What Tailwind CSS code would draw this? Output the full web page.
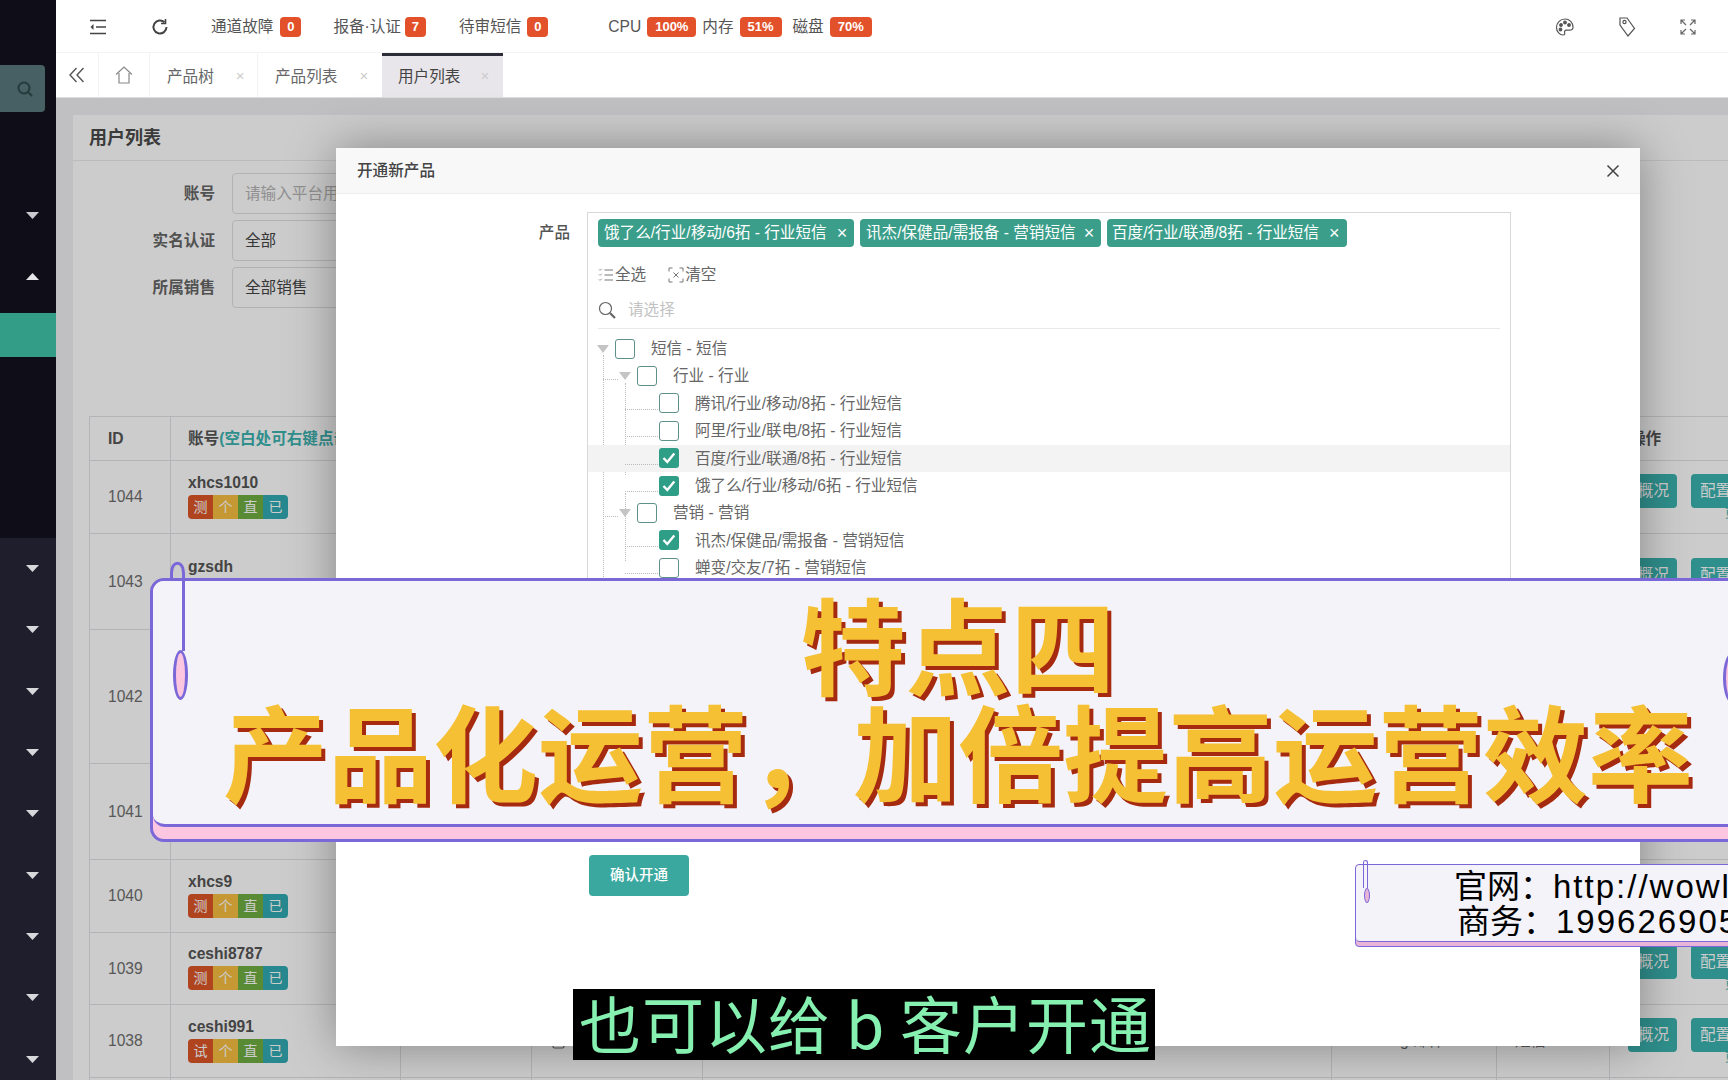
<!DOCTYPE html>
<html lang="zh-CN">
<head>
    <meta charset="UTF-8">
    <title>用户列表</title>
    <script src="https://cdn.jsdelivr.net/npm/@tailwindcss/browser@4"></script>
</head>
<body class="overflow-hidden">
<div class="relative w-[1728px] h-[1080px] overflow-hidden flex bg-white text-[15.6px] text-[#555] font-['Liberation_Sans','Noto_Sans_CJK_SC',sans-serif]">

    <!-- sidebar -->
    <aside class="w-[56px] shrink-0 flex flex-col bg-[#1e1e2c]">
        <div class="h-[538px] shrink-0 bg-[#0f0d18] flex flex-col">
            <div class="h-[65px]"></div>
            <div class="w-[45px] h-[47px] rounded-r bg-[#466063] flex items-center justify-end pr-[11px]">
                <svg class="w-[18px] h-[18px]" viewBox="0 0 18 18" fill="none" stroke="#26393c" stroke-width="2"><circle cx="8" cy="8" r="5.5"/><path d="M12 12l4 4"/></svg>
            </div>
            <div class="h-[73px]"></div>
            <div class="h-[61px] flex items-center justify-center pl-[9px]"><svg class="w-[13px] h-[7px]" viewBox="0 0 13 7"><path d="M0 0h13L6.5 7z" fill="#c9c9cf"/></svg></div>
            <div class="h-[61px] flex items-center justify-center pl-[9px]"><svg class="w-[13px] h-[7px]" viewBox="0 0 13 7"><path d="M0 7h13L6.5 0z" fill="#e6e6ea"/></svg></div>
            <div class="mt-[6px] h-[44px] bg-[#349d87]"></div>
        </div>
        <div class="h-[61.3px] shrink-0 flex items-center justify-center pl-[9px]"><svg class="w-[13px] h-[7px]" viewBox="0 0 13 7"><path d="M0 0h13L6.5 7z" fill="#d8d8dc"/></svg></div>
        <div class="h-[61.3px] shrink-0 flex items-center justify-center pl-[9px]"><svg class="w-[13px] h-[7px]" viewBox="0 0 13 7"><path d="M0 0h13L6.5 7z" fill="#d8d8dc"/></svg></div>
        <div class="h-[61.3px] shrink-0 flex items-center justify-center pl-[9px]"><svg class="w-[13px] h-[7px]" viewBox="0 0 13 7"><path d="M0 0h13L6.5 7z" fill="#d8d8dc"/></svg></div>
        <div class="h-[61.3px] shrink-0 flex items-center justify-center pl-[9px]"><svg class="w-[13px] h-[7px]" viewBox="0 0 13 7"><path d="M0 0h13L6.5 7z" fill="#d8d8dc"/></svg></div>
        <div class="h-[61.3px] shrink-0 flex items-center justify-center pl-[9px]"><svg class="w-[13px] h-[7px]" viewBox="0 0 13 7"><path d="M0 0h13L6.5 7z" fill="#d8d8dc"/></svg></div>
        <div class="h-[61.3px] shrink-0 flex items-center justify-center pl-[9px]"><svg class="w-[13px] h-[7px]" viewBox="0 0 13 7"><path d="M0 0h13L6.5 7z" fill="#d8d8dc"/></svg></div>
        <div class="h-[61.3px] shrink-0 flex items-center justify-center pl-[9px]"><svg class="w-[13px] h-[7px]" viewBox="0 0 13 7"><path d="M0 0h13L6.5 7z" fill="#d8d8dc"/></svg></div>
        <div class="h-[61.3px] shrink-0 flex items-center justify-center pl-[9px]"><svg class="w-[13px] h-[7px]" viewBox="0 0 13 7"><path d="M0 0h13L6.5 7z" fill="#d8d8dc"/></svg></div>
        <div class="h-[61.3px] shrink-0 flex items-center justify-center pl-[9px]"><svg class="w-[13px] h-[7px]" viewBox="0 0 13 7"><path d="M0 0h13L6.5 7z" fill="#d8d8dc"/></svg></div>
    </aside>

    <main class="flex-1 min-w-0 flex flex-col">
        <!-- top bar -->
        <header class="h-[53px] shrink-0 pt-[1px] flex items-center bg-white border-b border-[#f4f4f4]">
            <svg class="ml-[33px] w-[18px] h-[16px]" viewBox="0 0 18 16" fill="none" stroke="#444" stroke-width="1.6"><path d="M1 1.5h16M7 8h10M1 14.5h16"/><path d="M4.5 5L1.5 8l3 3z" fill="#444" stroke="none"/></svg>
            <svg class="ml-[44px] w-[18px] h-[18px]" viewBox="0 0 18 18" fill="none" stroke="#444" stroke-width="2"><path d="M15.5 9a6.5 6.5 0 1 1-2-4.7"/><path d="M14.5 1v4.5H10" stroke-width="1.6"/></svg>
            <span class="ml-[42px]">通道故障</span>
            <span class="ml-[7px] w-[21px] h-[20px] rounded-sm bg-[#e2512a] text-white text-[13px] font-bold flex items-center justify-center">0</span>
            <span class="ml-[32px]">报备·认证</span>
            <span class="ml-[4px] w-[21px] h-[20px] rounded-sm bg-[#e2512a] text-white text-[13px] font-bold flex items-center justify-center">7</span>
            <span class="ml-[33px]">待审短信</span>
            <span class="ml-[6px] w-[21px] h-[20px] rounded-sm bg-[#e2512a] text-white text-[13px] font-bold flex items-center justify-center">0</span>
            <span class="ml-[60px]">CPU</span>
            <span class="ml-[6px] w-[49px] h-[20px] rounded-sm bg-[#e2512a] text-white text-[13px] font-bold flex items-center justify-center">100%</span>
            <span class="ml-[6px]">内存</span>
            <span class="ml-[6px] w-[42px] h-[20px] rounded-sm bg-[#e2512a] text-white text-[13px] font-bold flex items-center justify-center">51%</span>
            <span class="ml-[11px]">磁盘</span>
            <span class="ml-[6px] w-[42px] h-[20px] rounded-sm bg-[#e2512a] text-white text-[13px] font-bold flex items-center justify-center">70%</span>
            <div class="ml-auto flex items-center gap-[42px] pr-[31px] text-[#555]">
                <svg class="w-[20px] h-[20px]" viewBox="0 0 20 20" fill="none" stroke="#555" stroke-width="1.2"><path d="M10 2C5 2 1.5 6 1.5 10.5S5 18 8 18c1.8 0 2-1.2 1.6-2.4-.4-1.3.4-2.4 1.8-2.4h3.2c2 0 3.4-1.2 3.4-3.2C18 5.500 14.500 2 10 2z"/><circle cx="6" cy="8" r="1.300" fill="#555"/><circle cx="10" cy="5.500" r="1.300" fill="#555"/><circle cx="14" cy="8" r="1.300" fill="#555"/><circle cx="5.500" cy="12.500" r="1.300" fill="#555"/></svg>
                <svg class="w-[20px] h-[22px]" viewBox="0 0 20 22" fill="none" stroke="#555" stroke-width="1.2"><path d="M3 2h7l7.500 10.500L11 20 3 9z"/><circle cx="7.500" cy="6" r="1.600"/></svg>
                <svg class="w-[18px] h-[18px]" viewBox="0 0 18 18" fill="none" stroke="#666" stroke-width="1.200"><path d="M7 7L2 2M2 6V2h4M11 7l5-5M12 2h4v4M7 11l-5 5M2 12v4h4M11 11l5 5M16 12v4h-4"/></svg>
            </div>
        </header>

        <!-- tabs -->
        <nav class="h-[44px] shrink-0 flex bg-white text-[#666]">
            <div class="w-[43px] flex items-center justify-center border-r border-[#f3f3f3]">
                <svg class="w-[18px] h-[18px]" viewBox="0 0 18 18" fill="none" stroke="#555" stroke-width="1.400"><path d="M8.500 2L2 9l6.500 7M15.500 2L9 9l6.500 7"/></svg>
            </div>
            <div class="w-[51px] flex items-center justify-center border-r border-[#f3f3f3]">
                <svg class="w-[18px] h-[20px]" viewBox="0 0 18 20" fill="none" stroke="#888" stroke-width="1.200"><path d="M1 9.500L9 2l8 7.500M4 8v10h10V8"/></svg>
            </div>
            <div class="w-[108px] pl-[17px] pt-[3px] flex items-center border-r border-[#f3f3f3]">产品树<span class="ml-[22px] text-[15px] text-[#ccc]">×</span></div>
            <div class="w-[124px] pl-[17px] pt-[3px] flex items-center">产品列表<span class="ml-[22px] text-[15px] text-[#ccc]">×</span></div>
            <div class="w-[121px] pl-[16px] flex items-center bg-[#e8e6ea] border-t-[3px] border-[#2d2d3a] text-[#444]">用户列表<span class="ml-[20px] text-[15px] text-[#ccc]">×</span></div>
        </nav>

        <!-- page under the dialog -->
        <section class="relative flex-1 min-h-0 bg-[#f0eff3] pt-[17px] pl-[17px] border-t border-[#ddd] overflow-hidden">
            <div class="bg-white h-[1000px]">
                <h2 class="h-[46px] pl-[16px] pt-[2px] flex items-center border-b border-[#ececf0] text-[18px] font-bold text-[#4a4a4a]">用户列表</h2>
                <form class="pt-[12px] flex flex-col gap-[6px]">
                    <div class="flex items-center h-[41px]"><label class="w-[142px] text-right font-bold text-[#666]">账号</label><div class="ml-[17px] w-[300px] h-full border border-[#dfdee3] rounded-sm pl-[12px] flex items-center text-[#b5b5b5]">请输入平台用户账号</div></div>
                    <div class="flex items-center h-[41px]"><label class="w-[142px] text-right font-bold text-[#666]">实名认证</label><div class="ml-[17px] w-[300px] h-full border border-[#dfdee3] rounded-sm pl-[12px] flex items-center text-[#444]">全部</div></div>
                    <div class="flex items-center h-[41px]"><label class="w-[142px] text-right font-bold text-[#666]">所属销售</label><div class="ml-[17px] w-[300px] h-full border border-[#dfdee3] rounded-sm pl-[12px] flex items-center text-[#444]">全部销售</div></div>
                </form>
                <table class="mt-[108px] ml-[16px] table-fixed border-collapse w-[1721px] text-[#6e6e6e]">
                    <colgroup><col class="w-[81px]"><col class="w-[230px]"><col class="w-[131px]"><col class="w-[171px]"><col class="w-[629px]"><col class="w-[165px]"><col class="w-[113px]"><col class="w-[201px]"></colgroup>
                    <thead>
                        <tr class="h-[44px] text-left font-bold text-[#555]">
                            <th class="border border-[#e2e1e6] pl-[18px]">ID</th>
                            <th class="border border-[#e2e1e6] pl-[17px] whitespace-nowrap overflow-hidden">账号<span class="text-[#3bb3af]">(空白处可右键点击查看)</span></th>
                            <th class="border border-[#e2e1e6]"></th><th class="border border-[#e2e1e6]"></th><th class="border border-[#e2e1e6]"></th><th class="border border-[#e2e1e6]"></th><th class="border border-[#e2e1e6]"></th>
                            <th class="border border-[#e2e1e6] pl-[20px]">操作</th>
                        </tr>
                    </thead>
                    <tbody>
                        <tr class="h-[73px]">
                            <td class="border border-[#e2e1e6] pl-[18px]">1044</td>
                            <td class="border border-[#e2e1e6] pl-[17px] pb-[6px]"><div class="font-bold text-[#555] leading-[25px]">xhcs1010</div>
                                <div class="flex w-fit rounded-sm overflow-hidden text-white text-[14px] leading-[24px] text-center"><span class="w-[25px] bg-[#dd5527]">测</span><span class="w-[25px] bg-[#f7be40]">个</span><span class="w-[25px] bg-[#70ad42]">直</span><span class="w-[25px] bg-[#31abb3]">已</span></div></td>
                            <td class="border border-[#e2e1e6]"></td><td class="border border-[#e2e1e6]"></td><td class="border border-[#e2e1e6]"></td><td class="border border-[#e2e1e6]"></td><td class="border border-[#e2e1e6]"></td>
                            <td class="border border-[#e2e1e6] pl-[18px]"><div class="flex gap-[14px] text-white"><span class="w-[49px] h-[34px] rounded-sm bg-[#3bb3af] flex items-center justify-end pr-[8px]">概况</span><span class="w-[70px] h-[34px] rounded-sm bg-[#3bb3af] flex items-center pl-[9px] whitespace-nowrap">配置</span></div><div class="h-[13px] pl-[97px] text-[12px] leading-[13px] text-[#3bb3af]">更多</div></td>
                        </tr>
                        <tr class="h-[96px]">
                            <td class="border border-[#e2e1e6] pl-[18px]">1043</td>
                            <td class="border border-[#e2e1e6] pl-[17px] pb-[6px]"><div class="font-bold text-[#555] leading-[25px]">gzsdh</div>
                                <div class="flex w-fit rounded-sm overflow-hidden text-white text-[14px] leading-[24px] text-center"><span class="w-[25px] bg-[#dd5527]">测</span><span class="w-[25px] bg-[#f7be40]">个</span><span class="w-[25px] bg-[#70ad42]">直</span><span class="w-[25px] bg-[#31abb3]">已</span></div></td>
                            <td class="border border-[#e2e1e6]"></td><td class="border border-[#e2e1e6]"></td><td class="border border-[#e2e1e6]"></td><td class="border border-[#e2e1e6]"></td><td class="border border-[#e2e1e6]"></td>
                            <td class="border border-[#e2e1e6] pl-[18px]"><div class="flex gap-[14px] text-white"><span class="w-[49px] h-[34px] rounded-sm bg-[#3bb3af] flex items-center justify-end pr-[8px]">概况</span><span class="w-[70px] h-[34px] rounded-sm bg-[#3bb3af] flex items-center pl-[9px] whitespace-nowrap">配置</span></div><div class="h-[13px]"></div></td>
                        </tr>
                        <tr class="h-[134px]">
                            <td class="border border-[#e2e1e6] pl-[18px]">1042</td>
                            <td class="border border-[#e2e1e6]"></td><td class="border border-[#e2e1e6]"></td><td class="border border-[#e2e1e6]"></td><td class="border border-[#e2e1e6]"></td><td class="border border-[#e2e1e6]"></td><td class="border border-[#e2e1e6]"></td><td class="border border-[#e2e1e6]"></td>
                        </tr>
                        <tr class="h-[96px]">
                            <td class="border border-[#e2e1e6] pl-[18px]">1041</td>
                            <td class="border border-[#e2e1e6]"></td><td class="border border-[#e2e1e6]"></td><td class="border border-[#e2e1e6]"></td><td class="border border-[#e2e1e6]"></td><td class="border border-[#e2e1e6]"></td><td class="border border-[#e2e1e6]"></td><td class="border border-[#e2e1e6]"></td>
                        </tr>
                        <tr class="h-[73px]">
                            <td class="border border-[#e2e1e6] pl-[18px]">1040</td>
                            <td class="border border-[#e2e1e6] pl-[17px] pb-[6px]"><div class="font-bold text-[#555] leading-[25px]">xhcs9</div>
                                <div class="flex w-fit rounded-sm overflow-hidden text-white text-[14px] leading-[24px] text-center"><span class="w-[25px] bg-[#dd5527]">测</span><span class="w-[25px] bg-[#f7be40]">个</span><span class="w-[25px] bg-[#70ad42]">直</span><span class="w-[25px] bg-[#31abb3]">已</span></div></td>
                            <td class="border border-[#e2e1e6]"></td><td class="border border-[#e2e1e6]"></td><td class="border border-[#e2e1e6]"></td><td class="border border-[#e2e1e6]"></td><td class="border border-[#e2e1e6]"></td><td class="border border-[#e2e1e6]"></td>
                        </tr>
                        <tr class="h-[72px]">
                            <td class="border border-[#e2e1e6] pl-[18px]">1039</td>
                            <td class="border border-[#e2e1e6] pl-[17px] pb-[6px]"><div class="font-bold text-[#555] leading-[25px]">ceshi8787</div>
                                <div class="flex w-fit rounded-sm overflow-hidden text-white text-[14px] leading-[24px] text-center"><span class="w-[25px] bg-[#dd5527]">测</span><span class="w-[25px] bg-[#f7be40]">个</span><span class="w-[25px] bg-[#70ad42]">直</span><span class="w-[25px] bg-[#31abb3]">已</span></div></td>
                            <td class="border border-[#e2e1e6]"></td><td class="border border-[#e2e1e6]"></td><td class="border border-[#e2e1e6]"></td><td class="border border-[#e2e1e6]"></td><td class="border border-[#e2e1e6]"></td>
                            <td class="border border-[#e2e1e6] pl-[18px]"><div class="flex gap-[14px] text-white"><span class="w-[49px] h-[34px] rounded-sm bg-[#3bb3af] flex items-center justify-end pr-[8px]">概况</span><span class="w-[70px] h-[34px] rounded-sm bg-[#3bb3af] flex items-center pl-[9px] whitespace-nowrap">配置</span></div><div class="h-[13px] pl-[97px] text-[12px] leading-[13px] text-[#3bb3af]">更多</div></td>
                        </tr>
                        <tr class="h-[73px]">
                            <td class="border border-[#e2e1e6] pl-[18px]">1038</td>
                            <td class="border border-[#e2e1e6] pl-[17px] pb-[6px]"><div class="font-bold text-[#555] leading-[25px]">ceshi991</div>
                                <div class="flex w-fit rounded-sm overflow-hidden text-white text-[14px] leading-[24px] text-center"><span class="w-[25px] bg-[#dd5527]">试</span><span class="w-[25px] bg-[#f7be40]">个</span><span class="w-[25px] bg-[#70ad42]">直</span><span class="w-[25px] bg-[#31abb3]">已</span></div></td>
                            <td class="border border-[#e2e1e6] pl-[17px]">****</td>
                            <td class="border border-[#e2e1e6] pl-[20px]"><span class="inline-flex items-center gap-[4px]"><svg class="w-[13px] h-[20px]" viewBox="0 0 13 20" fill="none" stroke="#666" stroke-width="1.200"><rect x="1" y="1" width="11" height="18" rx="1.500"/><path d="M1 15h11"/></svg>1</span></td>
                            <td class="border border-[#e2e1e6]"></td>
                            <td class="border border-[#e2e1e6] pl-[68px]">g 邮件</td>
                            <td class="border border-[#e2e1e6] pl-[18px]">短信</td>
                            <td class="border border-[#e2e1e6] pl-[18px]"><div class="flex gap-[14px] text-white"><span class="w-[49px] h-[34px] rounded-sm bg-[#3bb3af] flex items-center justify-end pr-[8px]">概况</span><span class="w-[70px] h-[34px] rounded-sm bg-[#3bb3af] flex items-center pl-[9px] whitespace-nowrap">配置</span></div><div class="h-[13px] pl-[97px] text-[12px] leading-[13px] text-[#3bb3af]">更多</div></td>
                        </tr>
                        <tr class="h-[73px]"><td class="border border-[#e2e1e6]"></td><td class="border border-[#e2e1e6]"></td><td class="border border-[#e2e1e6]"></td><td class="border border-[#e2e1e6]"></td><td class="border border-[#e2e1e6]"></td><td class="border border-[#e2e1e6]"></td><td class="border border-[#e2e1e6]"></td><td class="border border-[#e2e1e6]"></td></tr>
                    </tbody>
                </table>
            </div>
            <!-- dim layer -->
            <div class="absolute inset-0 bg-black/20"></div>
        </section>
    </main>

    <!-- dialog -->
    <div class="absolute left-[336px] top-[148px] w-[1304px] h-[898px] bg-white shadow-[0_0_45px_rgba(0,0,0,0.35)]">
        <div class="h-[46px] flex items-center justify-between pl-[21px] pr-[20px] bg-[#f8f8f8] border-b border-[#eeeeee] font-medium text-[#444]">
            <span>开通新产品</span>
            <svg class="w-[14px] h-[14px]" viewBox="0 0 14 14" fill="none" stroke="#444" stroke-width="1.500"><path d="M1.500 1.500l11 11M12.500 1.500l-11 11"/></svg>
        </div>
        <div class="flex pt-[18px]">
            <label class="w-[234px] pt-[9px] text-right font-medium text-[#555]">产品</label>
            <div class="ml-[17px] w-[924px] h-[620px] border border-[#d8d8d8]">
                <div class="pl-[10px] pt-[6px] flex gap-[6px] text-white">
                    <span class="h-[28px] w-[256px] rounded-sm bg-[#3a9e8a] pl-[6px] flex items-center whitespace-nowrap">饿了么/行业/移动/6拓 - 行业短信<span class="ml-[10px] text-[18px] leading-none">×</span></span>
                    <span class="h-[28px] w-[241px] rounded-sm bg-[#3a9e8a] pl-[6px] flex items-center whitespace-nowrap">讯杰/保健品/需报备 - 营销短信<span class="ml-[8px] text-[18px] leading-none">×</span></span>
                    <span class="h-[28px] w-[240px] rounded-sm bg-[#3a9e8a] pl-[5px] flex items-center whitespace-nowrap">百度/行业/联通/8拓 - 行业短信<span class="ml-[10px] text-[18px] leading-none">×</span></span>
                </div>
                <div class="pl-[10px] pt-[12px] h-[44px] flex items-center text-[#666]">
                    <svg class="w-[16px] h-[16px]" viewBox="0 0 16 16" fill="none" stroke="#777" stroke-width="1"><path d="M6.500 3H15M6.500 8H15M6.500 13H15" /><path d="M1 2.500l1 1 2-2M1 7.500l1 1 2-2M1 12.500l1 1 2-2" stroke-dasharray="1.500 .8"/></svg>
                    <span class="ml-[1px]">全选</span>
                    <svg class="ml-[22px] w-[16px] h-[16px]" viewBox="0 0 16 16" fill="none" stroke="#777" stroke-width="1"><path d="M1 4.500V1h3.500M11.500 1H15v3.500M1 11.500V15h3.500M15 11.500V15h-3.500M5.500 5.500l5 5M10.500 5.500l-5 5"/></svg>
                    <span class="ml-[1px]">清空</span>
                </div>
                <div class="mx-[10px] h-[37px] mt-[1px] flex items-center border-b border-[#e8e8e8] text-[#c2c2c2]">
                    <svg class="w-[18px] h-[18px]" viewBox="0 0 18 18" fill="none" stroke="#666" stroke-width="1.200"><circle cx="7.500" cy="7.500" r="6"/><path d="M12 12l5 5" stroke-width="2.200"/></svg>
                    <span class="ml-[12px]">请选择</span>
                </div>
                <!-- tree -->
                <div class="relative pt-[6px] text-[#666]">
                    <div class="absolute left-[15px] top-[26px] h-[230px] border-l border-dotted border-[#bbb]"></div>
                    <div class="absolute left-[37px] top-[54px] h-[92px] border-l border-dotted border-[#bbb]"></div>
                    <div class="absolute left-[37px] top-[164px] h-[68px] border-l border-dotted border-[#bbb]"></div>

                    <div class="flex items-center h-[27.4px] pl-[8px]">
                        <svg class="w-[14px] h-[8px] mr-[5px]" viewBox="0 0 14 8"><path d="M1 0h12L7 8z" fill="#c4c4c4"/></svg>
                        <span class="w-[20px] h-[20px] rounded-[3px] border border-[#5f8f8a]"></span>
                        <span class="ml-[16px]">短信 - 短信</span>
                    </div>
                    <div class="relative flex items-center h-[27.4px] pl-[30px]">
                        <i class="absolute left-[15px] top-[17px] w-[15px] border-t border-dotted border-[#bbb]"></i>
                        <svg class="w-[14px] h-[8px] mr-[5px]" viewBox="0 0 14 8"><path d="M1 0h12L7 8z" fill="#c4c4c4"/></svg>
                        <span class="w-[20px] h-[20px] rounded-[3px] border border-[#5f8f8a]"></span>
                        <span class="ml-[16px]">行业 - 行业</span>
                    </div>
                    <div class="relative flex items-center h-[27.4px] pl-[71px]">
                        <i class="absolute left-[37px] top-[19px] w-[33px] border-t border-dotted border-[#bbb]"></i>
                        <span class="w-[20px] h-[20px] rounded-[3px] border border-[#5f8f8a]"></span>
                        <span class="ml-[16px]">腾讯/行业/移动/8拓 - 行业短信</span>
                    </div>
                    <div class="relative flex items-center h-[27.4px] pl-[71px]">
                        <i class="absolute left-[37px] top-[19px] w-[33px] border-t border-dotted border-[#bbb]"></i>
                        <span class="w-[20px] h-[20px] rounded-[3px] border border-[#5f8f8a]"></span>
                        <span class="ml-[16px]">阿里/行业/联电/8拓 - 行业短信</span>
                    </div>
                    <div class="relative flex items-center h-[27.4px] pl-[71px] bg-[#f3f3f3]">
                        <i class="absolute left-[37px] top-[19px] w-[33px] border-t border-dotted border-[#bbb]"></i>
                        <span class="w-[20px] h-[20px] rounded-[3px] bg-[#2f9e86] flex items-center justify-center"><svg class="w-[14px] h-[12px]" viewBox="0 0 14 12" fill="none" stroke="#fff" stroke-width="2.400"><path d="M1.500 6l3.800 4 7-8.500"/></svg></span>
                        <span class="ml-[16px]">百度/行业/联通/8拓 - 行业短信</span>
                    </div>
                    <div class="relative flex items-center h-[27.4px] pl-[71px]">
                        <i class="absolute left-[37px] top-[19px] w-[33px] border-t border-dotted border-[#bbb]"></i>
                        <span class="w-[20px] h-[20px] rounded-[3px] bg-[#2f9e86] flex items-center justify-center"><svg class="w-[14px] h-[12px]" viewBox="0 0 14 12" fill="none" stroke="#fff" stroke-width="2.400"><path d="M1.500 6l3.800 4 7-8.500"/></svg></span>
                        <span class="ml-[16px]">饿了么/行业/移动/6拓 - 行业短信</span>
                    </div>
                    <div class="relative flex items-center h-[27.4px] pl-[30px]">
                        <i class="absolute left-[15px] top-[17px] w-[15px] border-t border-dotted border-[#bbb]"></i>
                        <svg class="w-[14px] h-[8px] mr-[5px]" viewBox="0 0 14 8"><path d="M1 0h12L7 8z" fill="#c4c4c4"/></svg>
                        <span class="w-[20px] h-[20px] rounded-[3px] border border-[#5f8f8a]"></span>
                        <span class="ml-[16px]">营销 - 营销</span>
                    </div>
                    <div class="relative flex items-center h-[27.4px] pl-[71px]">
                        <i class="absolute left-[37px] top-[19px] w-[33px] border-t border-dotted border-[#bbb]"></i>
                        <span class="w-[20px] h-[20px] rounded-[3px] bg-[#2f9e86] flex items-center justify-center"><svg class="w-[14px] h-[12px]" viewBox="0 0 14 12" fill="none" stroke="#fff" stroke-width="2.400"><path d="M1.500 6l3.800 4 7-8.500"/></svg></span>
                        <span class="ml-[16px]">讯杰/保健品/需报备 - 营销短信</span>
                    </div>
                    <div class="relative flex items-center h-[27.4px] pl-[71px]">
                        <i class="absolute left-[37px] top-[19px] w-[33px] border-t border-dotted border-[#bbb]"></i>
                        <span class="w-[20px] h-[20px] rounded-[3px] border border-[#5f8f8a]"></span>
                        <span class="ml-[16px]">蝉变/交友/7拓 - 营销短信</span>
                    </div>
                </div>
            </div>
        </div>
        <button class="ml-[253px] mt-[23px] w-[100px] h-[41px] rounded-sm bg-[#3ba8a0] text-white text-[14.5px] font-medium">确认开通</button>
    </div>

    <!-- big caption banner -->
    <div class="absolute left-[150px] top-[578px] w-[1616px] h-[264px] rounded-[14px] bg-[#fcc6e0] border-[3px] border-[#7b68d8]">
        <div class="h-[246px] rounded-[12px] rounded-t-[11px] bg-[#f3f3f9] border-b-[3px] border-[#7b68d8] pt-[7px] text-center text-[105px] leading-[107px] font-bold text-[#f6c035] font-['Noto_Sans_CJK_SC',sans-serif] [text-shadow:4px_4px_0_#a52a0f]">
            <div>特点四</div>
            <div class="whitespace-nowrap">产品化运营&#xFF0C;加倍提高运营效率</div>
        </div>
        <svg class="absolute left-[17px] top-[-22px] w-[16px] h-[95px]" viewBox="0 0 16 95" fill="none" stroke="#7b68d8" stroke-width="3"><path d="M1.500 19V14C1.500 1 13.500 1 13.500 14V92"/></svg>
        <div class="absolute left-[20px] top-[69px] w-[15px] h-[50px] rounded-[50%] bg-[#fcc6e0] border-[3px] border-[#7b68d8]"></div>
        <div class="absolute right-[22px] top-[72px] w-[18px] h-[50px] rounded-[50%] bg-[#fcc6e0] border-[3px] border-[#7b68d8]"></div>
    </div>

    <!-- contact banner -->
    <div class="absolute left-[1355px] top-[864px] w-[500px] h-[83px] rounded-[4px] bg-[#e8b4d8] border border-[#7b68d8]">
        <div class="h-[77px] rounded-[4px] bg-[#f3f3f9] border-b border-[#7b68d8] pl-[98px] pt-[4px] text-[33px] leading-[35px] text-black font-['Liberation_Sans','Noto_Sans_CJK_SC',sans-serif] whitespace-nowrap">
            <div>官网&#xFF1A;<span class="tracking-[2px]">http://wowl</span></div>
            <div class="pl-[3px]">商务&#xFF1A;<span class="tracking-[2px]">199626905</span></div>
        </div>
        <div class="absolute left-[7px] top-[-5px] w-[5px] h-[28px] rounded-t-full border border-b-0 border-[#7b68d8]"></div>
        <div class="absolute left-[8px] top-[23px] w-[6px] h-[15px] rounded-[50%] border border-[#7b68d8] bg-[#e8b4d8]"></div>
    </div>

    <!-- subtitle -->
    <div class="absolute left-[573px] top-[989px] w-[582px] h-[71px] bg-black pl-[6px] pb-[6px] flex items-center whitespace-nowrap text-[62px] tracking-[1px] leading-none text-[#86f0b0] font-['Noto_Sans_CJK_SC',sans-serif]">也可以给 b 客户开通</div>
</div>
</body>
</html>
